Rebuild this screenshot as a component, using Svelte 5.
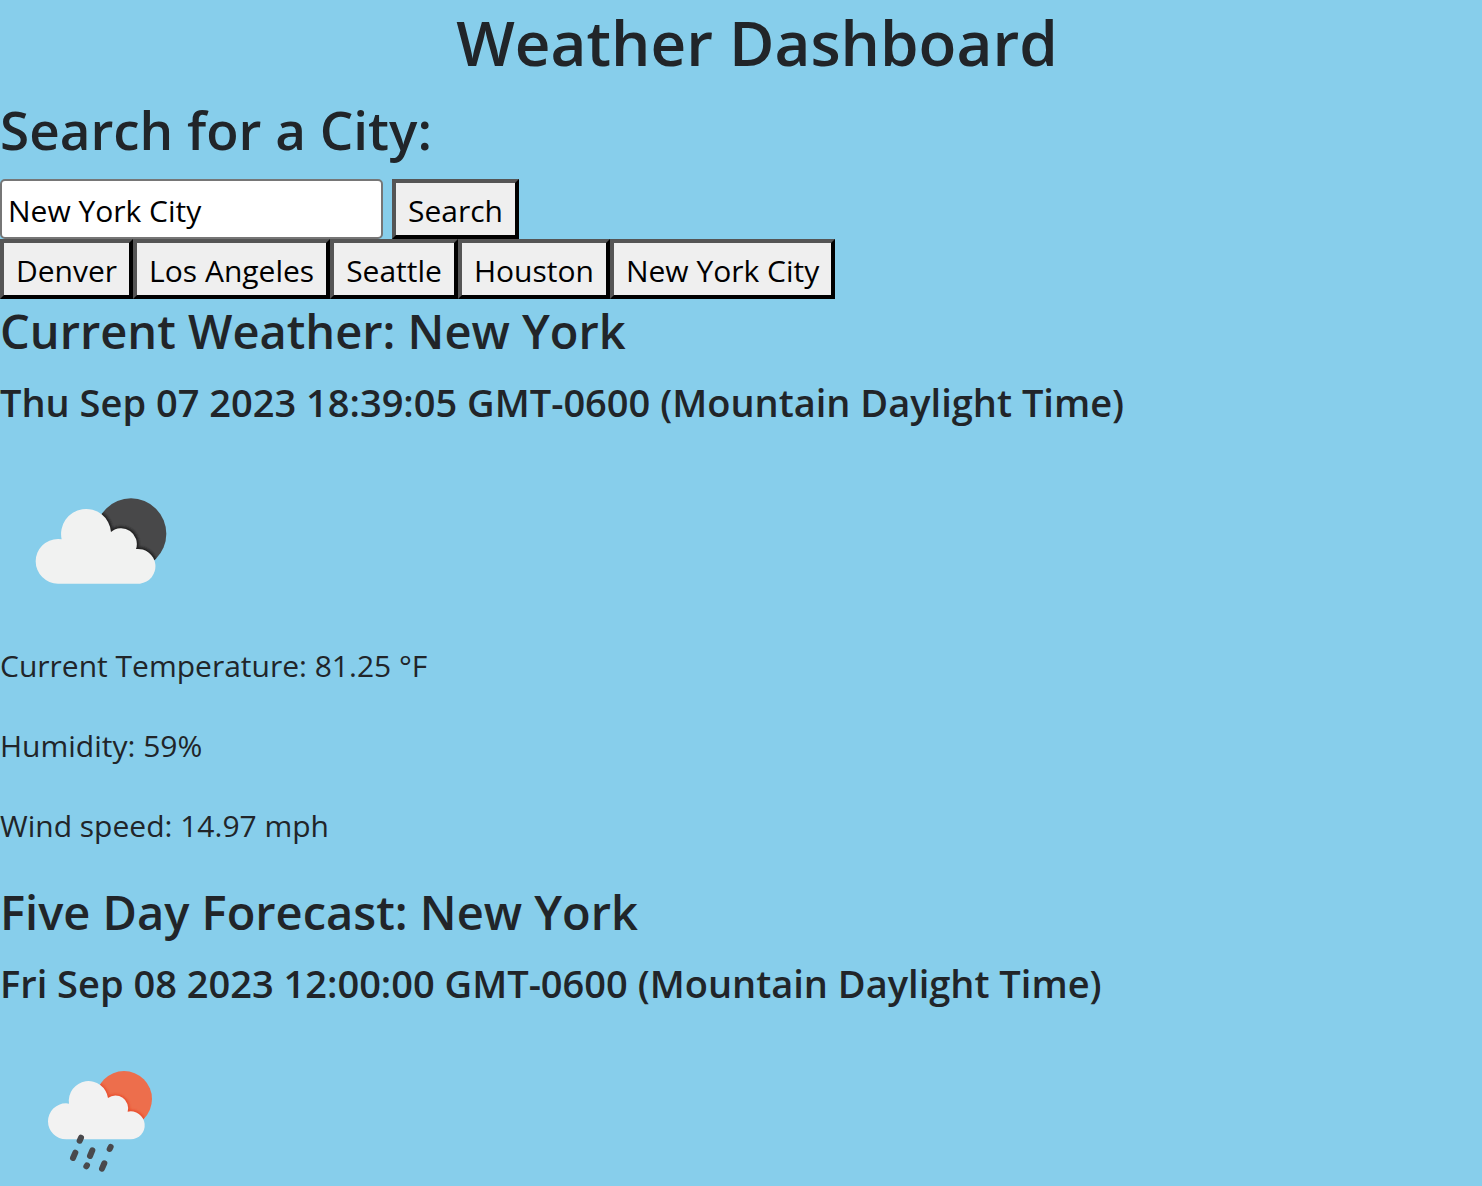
<script>
  let query = $state('New York City');
  const cities = ['Denver', 'Los Angeles', 'Seattle', 'Houston', 'New York City'];
  const readings = ['Current Temperature: 81.25 °F', 'Humidity: 59%', 'Wind speed: 14.97 mph'];
</script>

<header>
  <h1>Weather Dashboard</h1>
</header>

<main>
  <form onsubmit={(e) => e.preventDefault()}>
    <h2><label for="city">Search for a City:</label></h2>
    <div class="search">
      <input id="city" type="text" bind:value={query} />
      <button type="submit">Search</button>
    </div>
  </form>

  <nav class="history" aria-label="Recent cities">
    {#each cities as city}
      <button type="button" onclick={() => (query = city)}>{city}</button>
    {/each}
  </nav>

  <section>
    <h3>Current Weather: New York</h3>
    <h5>Thu Sep 07 2023 18:39:05 GMT-0600 (Mountain Daylight Time)</h5>
    <svg class="icon" viewBox="0 0 200 200" role="img" aria-label="Broken clouds">
      <defs>
        <clipPath id="moon"><circle cx="333" cy="161" r="106" /></clipPath>
        <path id="cloud" d="M114 311A67 67 0 0 1 114 177Q120 177 125 178A75 75 0 1 1 273 156A47 47 0 0 1 348 207A52 52 0 1 1 360 311Z" />
        <filter id="soft" x="-10%" y="-10%" width="120%" height="120%"><feGaussianBlur stdDeviation="3" /></filter>
      </defs>
      <g transform="translate(20 38) scale(.3333)">
        <circle cx="333" cy="161" r="106" fill="#484849" />
        <g clip-path="url(#moon)"><use href="#cloud" fill="#202022" stroke="#202022" stroke-width="12" filter="url(#soft)" /></g>
        <use href="#cloud" fill="#f1f2f1" />
      </g>
    </svg>
    {#each readings as reading}
      <p>{reading}</p>
    {/each}
  </section>

  <section>
    <h3>Five Day Forecast: New York</h3>
    <h5>Fri Sep 08 2023 12:00:00 GMT-0600 (Mountain Daylight Time)</h5>
    <svg class="icon" viewBox="0 0 200 200" role="img" aria-label="Rain">
      <defs>
        <clipPath id="sun"><circle cx="282" cy="129" r="84" /></clipPath>
        <path id="raincloud" d="M108 250A54 54 0 0 1 108 142L117 143A59 59 0 1 1 234 126A38 38 0 0 1 293 167A42 42 0 1 1 302 250Z" />
      </defs>
      <g transform="translate(30 33) scale(.3333)">
        <circle cx="282" cy="129" r="84" fill="#ed6e4c" />
        <g clip-path="url(#sun)"><use href="#raincloud" fill="#e9502f" stroke="#e9502f" stroke-width="10" filter="url(#soft)" /></g>
        <use href="#raincloud" fill="#f2f2f2" />
        <path class="drops" d="M153 245L149 254M136 290L129 306M187 283L180 300M242 273L239 279M171 328L169 331M223 322L216 338" />
      </g>
    </svg>
  </section>
</main>

<style>
  :global(body) {
    margin: 0;
    overflow-x: hidden;
    background: #87ceeb;
    color: #212529;
    font-family: "Open Sans", "Noto Sans", sans-serif;
    font-size: 30px;
    line-height: 48px;
  }
  :global(html) {
    scrollbar-width: none;
  }
  h1, h2, h3, h5 {
    margin: 0 0 16px;
    font-weight: 600;
  }
  header {
    padding-left: 32px;
  }
  h1 {
    margin-bottom: 12px;
    font-size: 62px;
    line-height: 84px;
    text-align: center;
  }
  h2 {
    font-size: 53px;
    line-height: 67px;
  }
  h3 {
    font-size: 47px;
    line-height: 61px;
  }
  h5 {
    font-size: 38px;
    line-height: 48px;
  }
  .search {
    display: flex;
    gap: 9px;
  }
  input, button {
    box-sizing: border-box;
    height: 60px;
    margin: 0;
    font: inherit;
    color: #000;
  }
  input {
    width: 383px;
    padding: 4px 6px 2px;
    border: 2px solid #767676;
    border-radius: 5px;
    background: #fff;
  }
  button {
    padding: 4px 12px 0;
    border: 4px solid;
    border-color: #555 #000 #000 #555;
    border-radius: 0;
    background: #efefef;
    white-space: nowrap;
  }
  .history {
    display: flex;
    flex-wrap: wrap;
    padding-bottom: 2px;
  }
  .icon {
    display: block;
    width: 200px;
    height: 200px;
  }
  .drops {
    fill: none;
    stroke: #49494c;
    stroke-width: 18;
    stroke-linecap: round;
  }
  p {
    margin: 0 0 32px;
  }
</style>
